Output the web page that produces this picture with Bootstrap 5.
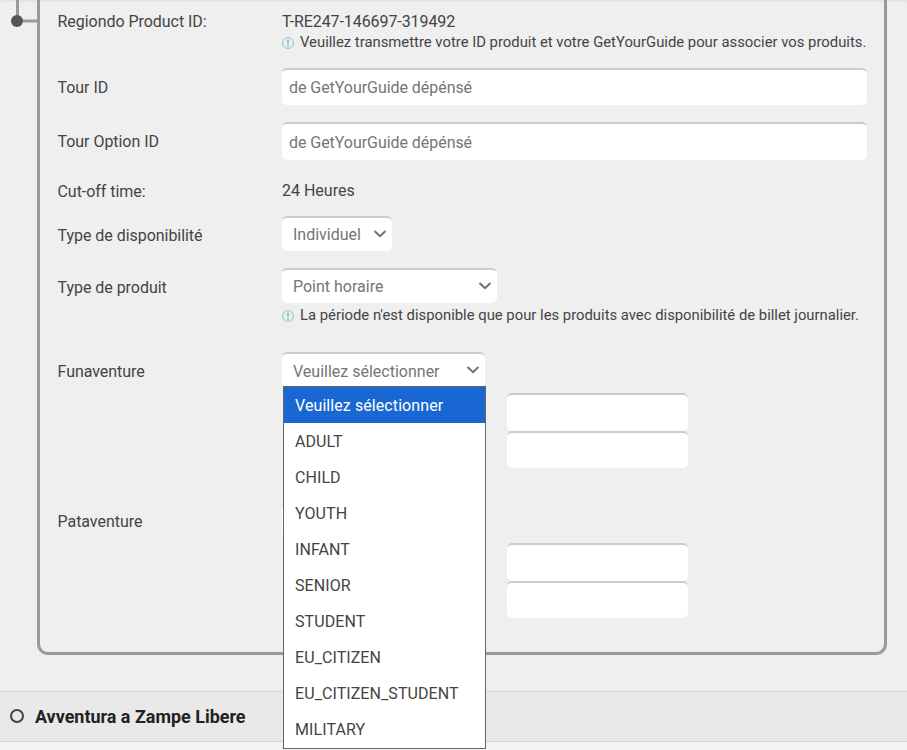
<!DOCTYPE html>
<html lang="fr">
<head>
  <meta charset="UTF-8" />
  <meta name="viewport" content="width=device-width, initial-scale=1.0"/>
  <title>GetYourGuide - Produits</title>
  <link href="https://cdn.jsdelivr.net/npm/bootstrap@5.3.2/dist/css/bootstrap.min.css" rel="stylesheet">
  <style>
    body { background: #f3f3f3; font-family: Roboto, "Liberation Sans", sans-serif; font-size: 16px; line-height: 24px; color: #444; height: 750px; }
    .product-area { background: #efefef; height: 691px; box-shadow: inset 0 3px 3px -2px #ddd; }

    /* timeline on the left */
    .rail { width: 37px; height: 27px; flex: none; }
    .rail svg { display: block; }

    .panel { width: 850px; height: 665px; margin-top: -10px; padding: 7px 17px 0 17.5px; border: 3px solid #999; border-radius: 11px; }
    .field-label { width: 224.5px; flex: none; letter-spacing: -.04px; }
    .field-value { width: 585px; }
    .product-code { letter-spacing: -.08px; }
    .hint { font-size: 14.84px; line-height: 20px; white-space: nowrap; }
    .hint svg { margin: 5px 6px 0 0; flex: none; }
    .id-hint { margin-top: -2px; }
    .product-hint { padding-top: 2px; }

    .row-id { height: 68px; padding-top: 10px; }
    .row-tour { height: 54px; }
    .row-cutoff { height: 40px; }
    .row-avail { height: 52px; }
    .row-product { height: 84px; }
    .row-variant { height: 150px; }
    .row-tour .field-label, .row-avail .field-label, .row-product .field-label, .row-variant .field-label { padding-top: 8px; }
    .row-cutoff .field-label { padding-top: 4px; }
    .row-cutoff .field-value { padding-top: 3px; }

    .panel .form-control, .picker { border: 0; border-top: 2px solid #ccc; border-radius: 5px; background: #fff; color: #757575; }
    .panel .form-control { height: 38px; padding: 0 7px; font-size: 16px; letter-spacing: -.05px; }
    .panel .form-control::placeholder { color: #757575; }
    .panel .tour-input { height: 37px; }
    .picker { height: 35px; padding: 0 5px 0 11px; }
    .picker-avail { width: 110px; }
    .picker-product { width: 215px; }
    .picker-variant { width: 203px; }
    .picker svg { margin-bottom: 1px; }
    .picker-variant span { padding-top: 2px; }
    .variant-inputs { width: 181px; margin-left: 225px; padding-top: 6px; }
    .panel .variant-inputs .last-input { height: 37px; }

    .option-list { top: 34px; left: 1px; width: 203px; height: 363px; padding: 0; border: 1px solid #666; border-radius: 0; font-size: 16px; }
    .option-list .dropdown-item { height: 36px; padding: 7px 11px 5px; line-height: 24px; color: #444; letter-spacing: .08px; }
    .option-list .dropdown-item.active { background: #1967d2; color: #fff; }

    .next-product { height: 51px; background: #e9e9e9; border-top: 1px solid #d8d8d8; border-bottom: 1px solid #d8d8d8; padding-left: 10px; }
    .next-product svg { margin-bottom: 1px; }
    .next-title { font-size: 17.95px; color: #222; margin-left: 11px; }
  </style>
</head>
<body class="overflow-hidden">

  <!-- Product mapping -->
  <div class="product-area d-flex align-items-start">
    <div class="rail">
      <svg width="37" height="27"><path d="M17.5 0V21M17 21H37" stroke="#999" stroke-width="3" fill="none"/><circle cx="17" cy="21" r="6" fill="#555"/></svg>
    </div>

    <div class="panel">
      <div class="row-id d-flex">
        <div class="field-label">Regiondo Product ID:</div>
        <div class="field-value">
          <div class="product-code">T-RE247-146697-319492</div>
          <div class="hint id-hint d-flex align-items-start">
            <svg width="12" height="12"><circle cx="6" cy="6" r="5.4" fill="none" stroke="#7fc4cc"/><path d="M6 2.5V7M6 8V9.5" stroke="#7fc4cc" stroke-width="1.8"/></svg>
            <span>Veuillez transmettre votre ID produit et votre GetYourGuide pour associer vos produits.</span>
          </div>
        </div>
      </div>

      <div class="row-tour d-flex">
        <label class="field-label" for="tourId">Tour ID</label>
        <div class="field-value"><input id="tourId" class="form-control tour-input" type="text" placeholder="de GetYourGuide dépénsé"></div>
      </div>

      <div class="row-tour d-flex">
        <label class="field-label" for="tourOption">Tour Option ID</label>
        <div class="field-value"><input id="tourOption" class="form-control" type="text" placeholder="de GetYourGuide dépénsé"></div>
      </div>

      <div class="row-cutoff d-flex">
        <div class="field-label">Cut-off time:</div>
        <div class="field-value">24 Heures</div>
      </div>

      <div class="row-avail d-flex">
        <div class="field-label">Type de disponibilité</div>
        <div class="field-value">
          <div class="picker picker-avail d-flex align-items-center justify-content-between">
            <span>Individuel</span>
            <svg width="14" height="10"><path d="M1.5 2L7 7.2L12.5 2" fill="none" stroke="#707070" stroke-width="2"/></svg>
          </div>
        </div>
      </div>

      <div class="row-product d-flex">
        <div class="field-label">Type de produit</div>
        <div class="field-value">
          <div class="picker picker-product d-flex align-items-center justify-content-between">
            <span>Point horaire</span>
            <svg width="14" height="10"><path d="M1.5 2L7 7.2L12.5 2" fill="none" stroke="#707070" stroke-width="2"/></svg>
          </div>
          <div class="hint product-hint d-flex align-items-start">
            <svg width="12" height="12"><circle cx="6" cy="6" r="5.4" fill="none" stroke="#7fc4cc"/><path d="M6 2.5V7M6 8V9.5" stroke="#7fc4cc" stroke-width="1.8"/></svg>
            <span>La période n'est disponible que pour les produits avec disponibilité de billet journalier.</span>
          </div>
        </div>
      </div>

      <div class="row-variant d-flex">
        <div class="field-label">Funaventure</div>
        <div class="field-value">
          <div class="dropdown">
            <div class="picker picker-variant d-flex align-items-center justify-content-between">
              <span>Veuillez sélectionner</span>
              <svg width="14" height="10"><path d="M1.5 2L7 7.2L12.5 2" fill="none" stroke="#707070" stroke-width="2"/></svg>
            </div>
            <div class="dropdown-menu option-list show">
              <a class="dropdown-item active">Veuillez sélectionner</a>
              <a class="dropdown-item">ADULT</a>
              <a class="dropdown-item">CHILD</a>
              <a class="dropdown-item">YOUTH</a>
              <a class="dropdown-item">INFANT</a>
              <a class="dropdown-item">SENIOR</a>
              <a class="dropdown-item">STUDENT</a>
              <a class="dropdown-item">EU_CITIZEN</a>
              <a class="dropdown-item">EU_CITIZEN_STUDENT</a>
              <a class="dropdown-item">MILITARY</a>
            </div>
          </div>
          <div class="variant-inputs">
            <input class="form-control" type="text">
            <input class="form-control last-input" type="text">
          </div>
        </div>
      </div>

      <div class="row-variant d-flex">
        <div class="field-label">Pataventure</div>
        <div class="field-value">
          <div class="picker picker-variant"></div>
          <div class="variant-inputs">
            <input class="form-control" type="text">
            <input class="form-control last-input" type="text">
          </div>
        </div>
      </div>
    </div>
  </div>

  <!-- Next product -->
  <div class="next-product d-flex align-items-center">
    <svg width="14" height="14"><circle cx="7" cy="7" r="6" fill="none" stroke="#444" stroke-width="2"/></svg>
    <span class="next-title fw-bold">Avventura a Zampe Libere</span>
  </div>

  <script src="https://cdn.jsdelivr.net/npm/bootstrap@5.3.2/dist/js/bootstrap.bundle.min.js"></script>
</body>
</html>
